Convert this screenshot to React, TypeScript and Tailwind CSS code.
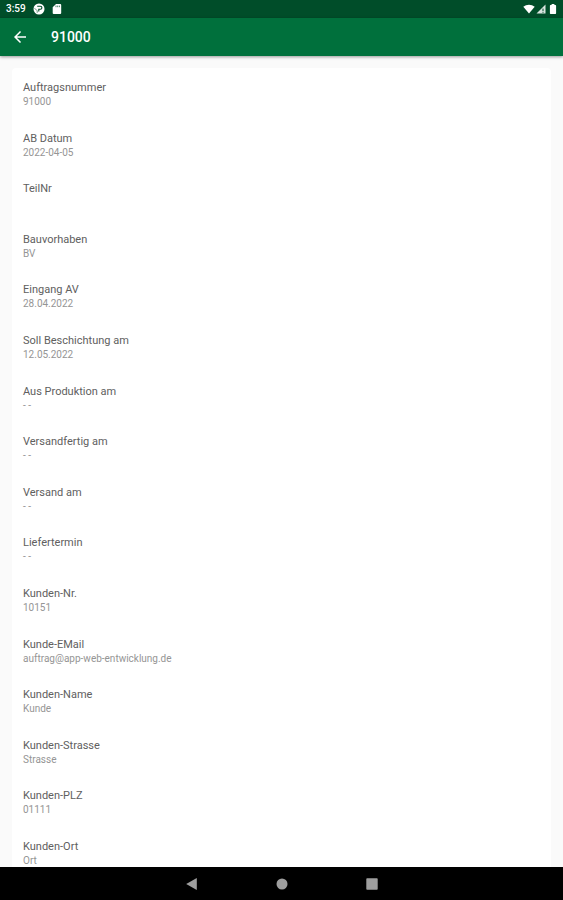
type Field = {
  label: string;
  value: string;
};

const fields: Field[] = [
  { label: "Auftragsnummer", value: "91000" },
  { label: "AB Datum", value: "2022-04-05" },
  { label: "TeilNr", value: "" },
  { label: "Bauvorhaben", value: "BV" },
  { label: "Eingang AV", value: "28.04.2022" },
  { label: "Soll Beschichtung am", value: "12.05.2022" },
  { label: "Aus Produktion am", value: "- -" },
  { label: "Versandfertig am", value: "- -" },
  { label: "Versand am", value: "- -" },
  { label: "Liefertermin", value: "- -" },
  { label: "Kunden-Nr.", value: "10151" },
  { label: "Kunde-EMail", value: "auftrag@app-web-entwicklung.de" },
  { label: "Kunden-Name", value: "Kunde" },
  { label: "Kunden-Strasse", value: "Strasse" },
  { label: "Kunden-PLZ", value: "01111" },
  { label: "Kunden-Ort", value: "Ort" },
];

function StatusBar() {
  return (
    <div className="flex h-[18px] shrink-0 items-center justify-between bg-[#004d29] px-[6px] text-white">
      <div className="flex items-center gap-[7px]">
        <span className="text-[10px] leading-none font-medium">3:59</span>
        <svg viewBox="0 0 12 12" className="h-3 w-3" aria-hidden="true">
          <circle cx="6" cy="6" r="5.5" fill="currentColor" />
          <path d="M4.2 3.2h3.2a1.5 1.5 0 0 1 0 3H5.8v2.3" fill="none" stroke="#004d29" strokeWidth="1.1" />
          <path d="M1.6 5.2l2.6 2.6v2" fill="none" stroke="#004d29" strokeWidth=".6" />
        </svg>
        <svg viewBox="0 0 10 12" className="h-3 w-[10px]" aria-hidden="true">
          <path d="M4 1h4.2a1 1 0 0 1 1 1v8a1 1 0 0 1-1 1H1.7a1 1 0 0 1-1-1V4.3z" fill="currentColor" />
          <path d="M4 2.6v1.6M5.7 2.6v1.6M7.4 2.6v1.6" stroke="#004d29" strokeWidth=".7" />
        </svg>
      </div>
      <div className="flex items-center gap-px">
        <svg viewBox="0 0 12 10" className="h-[10px] w-3" aria-hidden="true">
          <path d="M.3 2.8C3.6 0 8.4 0 11.7 2.8L6 9.6z" fill="currentColor" />
        </svg>
        <svg viewBox="0 0 10 10" className="h-[10px] w-[10px]" aria-hidden="true">
          <path d="M.5 9.5l9-9v9z" fill="currentColor" opacity=".85" />
          <path d="M7 4.6v2.4M7 7.8v1" stroke="#004d29" strokeWidth="1" />
        </svg>
        <svg viewBox="0 0 8 10" className="ml-[2px] h-[10px] w-2" aria-hidden="true">
          <path d="M2.6 0h2.8v1h1a.7.7 0 0 1 .7.7v7.6a.7.7 0 0 1-.7.7H1.6a.7.7 0 0 1-.7-.7V1.7a.7.7 0 0 1 .7-.7h1z" fill="currentColor" />
        </svg>
      </div>
    </div>
  );
}

function AppBar({ title }: { title: string }) {
  return (
    <header className="z-10 flex h-[38px] shrink-0 items-center gap-5 bg-[#00703c] px-3 text-white shadow-[0_1px_3px_rgba(0,0,0,0.4)]">
      <button type="button" aria-label="Zurück" className="flex h-6 w-[19px] items-center">
        <svg viewBox="4 4 16 16" className="ml-[2px] h-3 w-3" aria-hidden="true">
          <path d="M20 11H7.83l5.59-5.59L12 4l-8 8 8 8 1.41-1.41L7.83 13H20z" fill="currentColor" />
        </svg>
      </button>
      <h1 className="text-sm font-medium">{title}</h1>
    </header>
  );
}

function NavigationBar() {
  return (
    <nav className="flex h-[33px] shrink-0 items-center justify-center gap-[74px] bg-black text-[#9e9e9e]">
      <button type="button" aria-label="Zurück" className="flex w-4 justify-center">
        <svg viewBox="0 0 12 12" className="h-3 w-3" aria-hidden="true">
          <path d="M10.8 0v12L.2 6z" fill="currentColor" />
        </svg>
      </button>
      <button type="button" aria-label="Startseite" className="flex w-4 justify-center">
        <svg viewBox="0 0 12 12" className="h-3 w-3" aria-hidden="true">
          <circle cx="6" cy="6" r="5.5" fill="currentColor" />
        </svg>
      </button>
      <button type="button" aria-label="Übersicht" className="flex w-4 justify-center">
        <svg viewBox="0 0 12 12" className="h-3 w-3" aria-hidden="true">
          <rect x=".3" y=".3" width="11.4" height="11.4" rx=".8" fill="currentColor" />
        </svg>
      </button>
    </nav>
  );
}

export default function App() {
  return (
    <div className="flex h-screen flex-col bg-[#fafafa] font-[Roboto,sans-serif]">
      <StatusBar />
      <AppBar title="91000" />
      <main className="flex min-h-0 flex-1 flex-col overflow-hidden px-3 pt-3">
        <dl className="flex flex-1 flex-col justify-between gap-5 rounded-t-sm bg-white px-[11px] pt-3">
          {fields.map((field) => (
            <div key={field.label} className="h-7 shrink-0 pt-px leading-[14px]">
              <dt className="text-[11px] text-[#606060]">{field.label}</dt>
              <dd className="text-[10px] text-[#959595]">{field.value}</dd>
            </div>
          ))}
        </dl>
      </main>
      <NavigationBar />
    </div>
  );
}
